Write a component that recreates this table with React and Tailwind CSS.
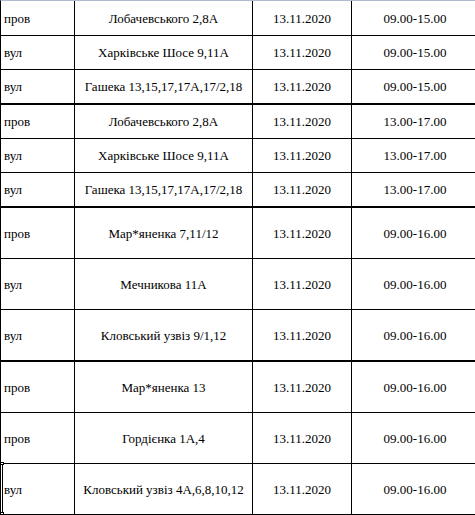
import React from 'react';

const rows = [
  { type: 'пров', street: 'Лобачевського 2,8А', time: '09.00-15.00', h: 'h-[35px]', border: 'border-b' },
  { type: 'вул', street: 'Харківське Шосе 9,11А', time: '09.00-15.00', h: 'h-[34px]', border: 'border-b' },
  { type: 'вул', street: 'Гашека 13,15,17,17А,17/2,18', time: '09.00-15.00', h: 'h-[35px]', border: 'border-b-2' },
  { type: 'пров', street: 'Лобачевського 2,8А', time: '13.00-17.00', h: 'h-[34px]', border: 'border-b' },
  { type: 'вул', street: 'Харківське Шосе 9,11А', time: '13.00-17.00', h: 'h-[34px]', border: 'border-b' },
  { type: 'вул', street: 'Гашека 13,15,17,17А,17/2,18', time: '13.00-17.00', h: 'h-[35px]', border: 'border-b-2' },
  { type: 'пров', street: 'Мар*яненка 7,11/12', time: '09.00-16.00', h: 'h-[51px]', border: 'border-b' },
  { type: 'вул', street: 'Мечникова 11А', time: '09.00-16.00', h: 'h-[51px]', border: 'border-b' },
  { type: 'вул', street: 'Кловський узвіз 9/1,12', time: '09.00-16.00', h: 'h-[52px]', border: 'border-b-2' },
  { type: 'пров', street: 'Мар*яненка 13', time: '09.00-16.00', h: 'h-[51px]', border: 'border-b' },
  { type: 'пров', street: 'Гордієнка 1А,4', time: '09.00-16.00', h: 'h-[51px]', border: 'border-b' },
  { type: 'вул', street: 'Кловський узвіз 4А,6,8,10,12', time: '09.00-16.00', h: 'h-[51px]', border: 'border-b', selected: true },
];

export default function App() {
  return (
    <div className="w-[475px] h-[515px] overflow-hidden bg-white text-black text-[13px] leading-none font-['Liberation_Serif','Times_New_Roman',serif]">
      <div className="w-[520px] border-t border-t-[#aebbd0] border-l border-l-black">
        {rows.map((r, i) => (
          <div key={i} className={`grid grid-cols-[74px_178px_99px_126px] border-black ${r.h} ${r.border}`}>
            <div className="relative flex items-center pl-[3px] border-r border-black">
              {r.selected && (
                <>
                  {/* Word's row-selection marker on the left edge */}
                  <div className="absolute left-[1px] -top-[1px] bottom-0 w-px bg-black" />
                  <div className="absolute -left-[1px] -top-[2px] w-[4px] h-[3px] border border-black bg-white" />
                  <div className="absolute -left-[1px] -bottom-[1px] w-[4px] h-[3px] border border-black bg-white" />
                </>
              )}
              {r.type}
            </div>
            <div className="flex items-center justify-center border-r border-black whitespace-nowrap">{r.street}</div>
            <div className="flex items-center justify-center border-r border-black">13.11.2020</div>
            <div className="flex items-center justify-center">{r.time}</div>
          </div>
        ))}
      </div>
    </div>
  );
}
